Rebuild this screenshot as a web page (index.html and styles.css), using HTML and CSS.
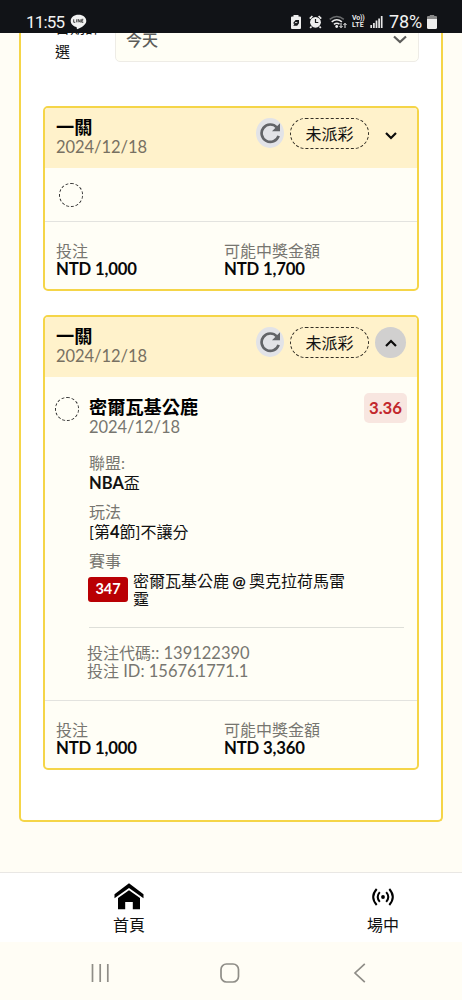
FILE: index.html
```
<!DOCTYPE html>
<html lang="zh-Hant">
<head>
<meta charset="utf-8">
<meta name="viewport" content="width=device-width, initial-scale=1">
<title>投注記錄</title>
<link rel="stylesheet" href="styles.css">
</head>
<body>
<div class="app">
  <header class="status">
    <span class="clock">11:55</span>
    <svg class="line-icon" width="17" height="16" viewBox="0 0 17 16"><path d="M8.5 .7C4 .7 .7 3.4 .7 6.9c0 3 2.4 5.3 5.8 6l.5 2.4c3.500-1.300 9.300-4.300 9.300-8.400C16.300 3.400 13 .7 8.500.7Z" fill="#f2f2f2"/><path d="M3.700 5.300v3h1.600M6.700 5.300v3M8.200 8.300v-3l2 3v-3M13.300 5.300h-1.600v3h1.600M11.700 6.800h1.400" fill="none" stroke="#333" stroke-width=".9"/></svg>
    <span class="spacer"></span>
    <svg class="st-card" width="10" height="14" viewBox="0 0 10 14"><path d="M2.500 1.500V0h5v1.500H9q1 0 1 1V13q0 1-1 1H1q-1 0-1-1V2.500q0-1 1-1Z" fill="#eee"/><path d="M2 8.200 4.600 5H8v3.200L6.200 10.800H2.300L3.500 8.800Z" fill="#15171a"/><path d="M4 7.600h2.300" stroke="#eee" stroke-width=".9"/></svg>
    <svg class="st-alarm" width="13" height="14" viewBox="0 0 13 14"><circle cx="6.500" cy="7.300" r="5.400" fill="#eee"/><path d="M.8 3.600 3.400 1M12.200 3.600 9.600 1M2.500 11.500 1.200 13M10.500 11.500l1.300 1.500" stroke="#eee" stroke-width="1.700"/><path d="M6.500 4v3.500h2.800" fill="none" stroke="#15171a" stroke-width="1.200"/></svg>
    <svg class="st-wifi" width="18" height="14" viewBox="0 0 18 14"><path d="M.7 4.300Q7.800-1.300 14.800 4.300" fill="none" stroke="#686a6c" stroke-width="1.500"/><path d="M2.700 6.900Q7.800 2.800 12.900 6.900M4.900 9.400Q7.800 7.300 10.500 9.200" fill="none" stroke="#eee" stroke-width="1.500"/><circle cx="7.700" cy="11.500" r="1.400" fill="#eee"/><path d="M12 8v4.500M10.500 11 12 12.700 13.500 11M16 13V8.500M14.500 10 16 8.300 17.500 10" fill="none" stroke="#eee" stroke-width="1"/></svg>
    <span class="volte"><span>Vo))</span><span class="lte">LTE</span></span>
    <svg class="st-signal" width="13" height="12" viewBox="0 0 13 12"><path d="M1.200 12V9M3.900 12V7M6.500 12V4.500M9.100 12V2.500M11.700 12V0" stroke="#e8e8e8" stroke-width="1.700"/></svg>
    <span class="pct">78%</span>
    <svg class="st-batt" width="10" height="14" viewBox="0 0 10 14"><path d="M2.800 1V0h4.400v1H9q1 0 1 1v3H0V2q0-1 1-1Z" fill="#898989"/><path d="M0 4h10v8.500q0 1.500-1.500 1.500h-7Q0 14 0 12.500Z" fill="#eee"/></svg>
  </header>

  <main class="content">
    <section class="panel">
      <div class="filter">
        <div class="filter-label">日期篩選</div>
        <div class="select"><span>今天</span><svg width="16" height="10" viewBox="0 0 16 10"><path d="m2 1.500 6 5.500L14 1.500" fill="none" stroke="#5d5d5a" stroke-width="2.200"/></svg></div>
      </div>

      <article class="card first">
        <div class="card-head">
          <div class="head-text"><h2>一關</h2><p>2024/12/18</p></div>
          <span class="refresh"><svg width="22" height="22" viewBox="0 0 22 22"><path d="M19.600 13.800A8.700 8.700 0 1 1 17.800 5.400" fill="none" stroke="#626468" stroke-width="2.700"/><path d="M21 1.200v8h-8Z" fill="#626468"/></svg></span>
          <span class="pill">未派彩</span>
          <span class="toggle"><svg width="12" height="8" viewBox="0 0 12 8"><path d="m1 1 5 5 5-5" fill="none" stroke="#0b0b0b" stroke-width="2.200"/></svg></span>
        </div>
        <div class="short-body"><span class="ring"></span></div>
        <div class="card-foot">
          <div><p>投注</p><strong>NTD 1,000</strong></div>
          <div><p>可能中獎金額</p><strong>NTD 1,700</strong></div>
        </div>
      </article>

      <article class="card">
        <div class="card-head">
          <div class="head-text"><h2>一關</h2><p>2024/12/18</p></div>
          <span class="refresh"><svg width="22" height="22" viewBox="0 0 22 22"><path d="M19.600 13.800A8.700 8.700 0 1 1 17.800 5.400" fill="none" stroke="#626468" stroke-width="2.700"/><path d="M21 1.200v8h-8Z" fill="#626468"/></svg></span>
          <span class="pill">未派彩</span>
          <span class="toggle open"><svg width="12" height="8" viewBox="0 0 12 8"><path d="m1 7 5-5 5 5" fill="none" stroke="#0b0b0b" stroke-width="2.200"/></svg></span>
        </div>
        <div class="bet">
          <span class="ring"></span>
          <div class="bet-info">
            <div class="bet-top">
              <div><h3>密爾瓦基公鹿</h3><p class="date">2024/12/18</p></div>
              <span class="odds">3.36</span>
            </div>
            <dl class="fields">
              <dt>聯盟:</dt><dd><b>NBA</b>盃</dd>
              <dt>玩法</dt><dd>[第<b>4</b>節]不讓分</dd>
              <dt>賽事</dt>
            </dl>
            <div class="match"><span class="match-no">347</span><span class="teams">密爾瓦基公鹿 <span class="at">@</span> 奧克拉荷馬雷霆</span></div>
            <div class="codes"><p>投注代碼<span class="num">:: 139122390</span></p><p>投注<span class="num"> ID: 156761771.1</span></p></div>
          </div>
        </div>
        <div class="card-foot">
          <div><p>投注</p><strong>NTD 1,000</strong></div>
          <div><p>可能中獎金額</p><strong>NTD 3,360</strong></div>
        </div>
      </article>
    </section>
  </main>

  <nav class="tabs">
    <a class="tab home"><svg width="30" height="28" viewBox="0 0 30 28"><path d="M15 1.300 .5 12.200v4L15 6l14.500 10.200v-4Z"/><path d="M15 8.200 4 16v11.300h7.200v-7.300h7.600v7.300H26V16Z"/></svg><span>首頁</span></a>
    <a class="tab live"><svg width="24" height="28" viewBox="0 0 24 28"><circle cx="12" cy="15" r="1.900"/><path d="M5.700 7q-7 8 0 16M18.300 7q7 8 0 16M8.800 10.200q-4.200 4.800 0 9.600M15.200 10.200q4.200 4.800 0 9.600" fill="none" stroke="#000" stroke-width="2"/></svg><span>場中</span></a>
  </nav>
  <footer class="sysnav">
    <svg width="20" height="20" viewBox="0 0 20 20"><path d="M2.500 1v18M10.200 1v18M17.800 1v18"/></svg>
    <svg width="20" height="20" viewBox="0 0 20 20"><rect x="1" y="1" width="17.500" height="18" rx="5.500"/></svg>
    <svg width="20" height="20" viewBox="0 0 20 20"><path d="M14.800.8 5 10l9.800 9.200"/></svg>
  </footer>
</div>
</body>
</html>
```
FILE: styles.css
```
* { box-sizing: border-box; margin: 0; padding: 0; }
body { font-family: Lato, "Noto Sans CJK TC", sans-serif; font-size: 16px; line-height: 18px; color: #111; }
svg { display: block; flex: none; }
.app { width: 462px; height: 1000px; display: flex; flex-direction: column; overflow: hidden; background: #fffdf5; }

.status { height: 33px; flex: none; background: #111317; color: #f2f2f2; display: flex; align-items: center; padding: 11px 25px 0 26px; font-family: Roboto, sans-serif; white-space: nowrap; }
.clock { font-size: 17px; letter-spacing: -.8px; width: 44px; line-height: 20px; }
.spacer { flex: 1; }
.st-card { margin-right: 8px; }
.st-alarm { margin-right: 7px; }
.st-wifi { margin-right: 5px; }
.volte { display: flex; flex-direction: column; font-size: 7px; line-height: 7px; width: 13px; margin-right: 5px; font-weight: 600; letter-spacing: -.2px; }
.volte .lte { letter-spacing: .2px; }
.st-signal { margin-right: 6px; }
.pct { font-size: 18px; letter-spacing: -.1px; width: 35px; margin-right: 3px; line-height: 20px; }

.content { height: 839px; flex: none; overflow: hidden; padding: 0 19px; }
.panel { height: 789px; border: 2px solid #f5d548; border-top: 0; border-radius: 0 0 5px 5px; background: #fff; padding: 0 22px; }
.filter { height: 73px; display: flex; }
.filter-label { width: 50px; margin: -18px 10px 0 12px; font-size: 15px; line-height: 24px; height: 50px; }
.select { flex: 1; height: 44px; margin-top: -15px; border: 1px solid #eeece6; border-radius: 5px; background: #fffef5; display: flex; justify-content: space-between; align-items: center; padding: 0 10px; color: #5d5d5a; font-weight: 500; }

.card { border: 2px solid #f5d548; border-radius: 5px; background: #fffef6; overflow: hidden; }
.card.first { margin-bottom: 24px; }
.card-head { height: 60px; background: #fff2cb; display: flex; align-items: flex-start; padding: 10px 11px 0 11px; }
.head-text { flex: 1; }
h2, h3 { font-size: 18.200px; line-height: 20px; font-weight: 700; color: #000; }
.head-text h2 { line-height: 19px; }
.head-text p, .date { font-size: 16.500px; line-height: 21px; color: #777062; letter-spacing: -.05px; }
.refresh { width: 28px; height: 30px; border-radius: 50%; background: #e2e3e7; display: grid; place-items: center; margin-right: 6px; }
.pill { width: 79px; height: 31px; border: 1px dashed #332f25; border-radius: 16px; line-height: 29px; text-align: center; margin-right: 6px; }
.toggle { width: 31px; height: 31px; border-radius: 50%; display: grid; place-items: center; padding-top: 4px; }
.toggle.open { background: #d1d0cf; padding-top: 0; }
.ring { width: 24px; height: 24px; border: 1px dashed #333; border-radius: 50%; flex: none; }
.short-body { height: 53px; display: flex; padding: 15px 14px 0; }
.card-foot { height: 68px; border-top: 1px solid #e3e3df; display: grid; grid-template-columns: 168px 1fr; padding: 20px 11px 0; color: #777670; }
.card-foot strong { display: block; color: #080808; font-size: 16.700px; line-height: 19px; font-weight: 700; letter-spacing: -.15px; }

.bet { height: 323px; display: flex; padding: 20px 10px 0 10px; }
.bet-info { flex: 1; margin-left: 10px; }
.bet-top { display: flex; justify-content: space-between; align-items: flex-start; height: 56px; }
.bet-top h3 { line-height: 20px; }
.date { color: #777670; }
.odds { width: 43px; height: 30px; line-height: 29px; margin-top: -4px; border-radius: 5px; text-align: center; background: #f8e6e0; color: #c2272c; font-size: 16.800px; font-weight: 700; }
.fields dt { color: #777670; line-height: 19px; }
.fields dd { line-height: 21px; margin-bottom: 9px; }
b { font-weight: 700; font-size: 16.500px; line-height: 1; }
.match { display: flex; margin-top: 1px; height: 57px; border-bottom: 1px solid #dedfd9; margin-right: 3px; }
.match-no { width: 40px; height: 25px; margin: 6px 5px 0 -1px; border-radius: 3px; background: #b90003; color: #fff; font-size: 14.500px; line-height: 24px; font-weight: 700; text-align: center; }
.teams { width: 218px; padding-top: 1px; word-spacing: -.8px; }
.at { font-weight: 700; line-height: 1; }
.codes { margin: 16px 0 0 -2px; color: #777670; }
.num { font-size: 16.500px; line-height: 1; }

.tabs { height: 70px; flex: none; background: #fff; border-top: 1px solid #e9e7e4; display: flex; justify-content: space-between; padding: 9px 62px 0 112px; }
.tab { display: flex; flex-direction: column; align-items: center; width: 34px; gap: 6px; }
.tab span { line-height: 18px; white-space: nowrap; }
.sysnav { height: 58px; flex: none; display: flex; gap: 110px; padding: 21px 0 0 90px; }
.sysnav svg { fill: none; stroke: #8f8d87; stroke-width: 1.700; }
```
